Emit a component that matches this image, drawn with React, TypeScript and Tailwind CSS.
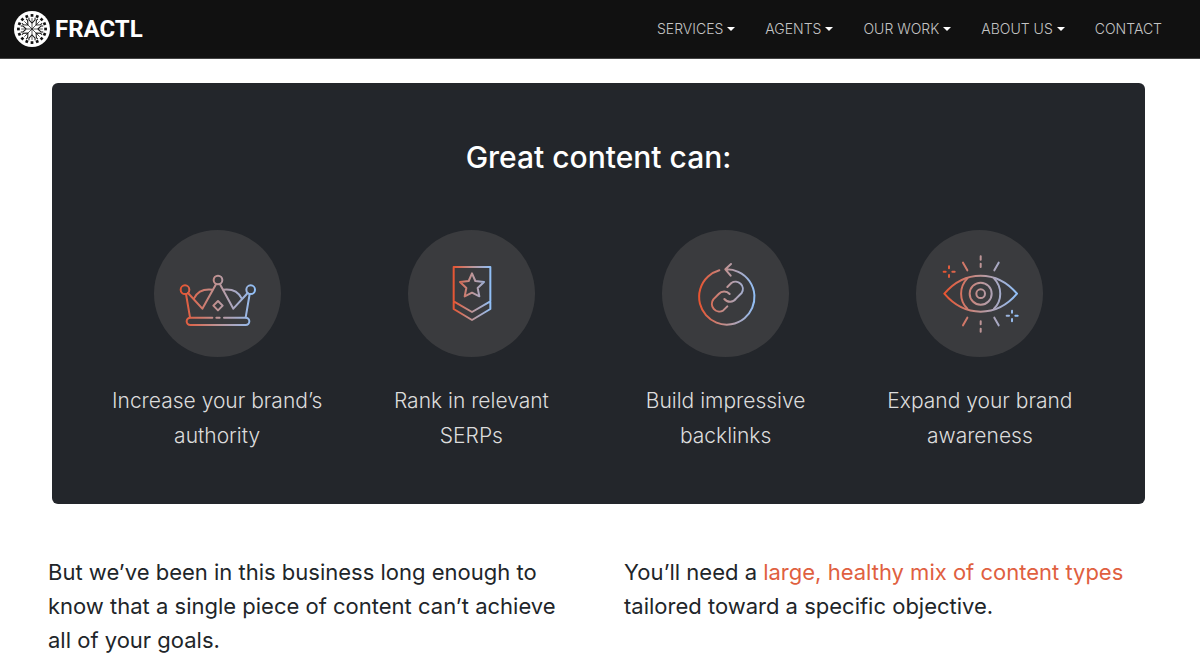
import type { ReactNode } from "react";

type NavItem = {
  label: string;
  menu?: boolean;
};

type Benefit = {
  label: string;
  icon: ReactNode;
};

const navItems: NavItem[] = [
  { label: "SERVICES", menu: true },
  { label: "AGENTS", menu: true },
  { label: "OUR WORK", menu: true },
  { label: "ABOUT US", menu: true },
  { label: "CONTACT" },
];

const spokes = [0, 45, 90, 135, 180, 225, 270, 315];

function Logo() {
  return (
    <svg viewBox="-53 -53 106 106" className="size-[36px]" aria-hidden="true">
      <circle r="53" fill="#fff" />
      {spokes.map((angle) => (
        <g key={angle} transform={`rotate(${angle})`} stroke="#111" fill="none">
          <path d="M0 0V-32" strokeWidth="2" />
          <path d="M0 -17L-9 -27V-33M0 -17L9 -27V-33" strokeWidth="3" />
          <path d="M-4 -44H4V-36H-4Z" fill="#111" stroke="none" />
          <path d="M-4 -44H4V-36H-4Z" fill="#111" stroke="none" transform="rotate(22.5)" />
        </g>
      ))}
    </svg>
  );
}

function IconFrame({ id, from, to, children }: { id: string; from: number; to: number; children: ReactNode }) {
  return (
    <svg viewBox="12 12 381 381" className="size-[127px] rounded-full bg-[#3a3b3e]" aria-hidden="true">
      <defs>
        <linearGradient id={id} gradientUnits="userSpaceOnUse" x1={from} x2={to} y1="0" y2="0">
          <stop offset="0" stopColor="#e8532f" />
          <stop offset="0.5" stopColor="#bd9597" />
          <stop offset="1" stopColor="#8fc1fb" />
        </linearGradient>
      </defs>
      <g stroke={`url(#${id})`} fill="none" strokeWidth="6" strokeLinecap="round" strokeLinejoin="round">
        {children}
      </g>
    </svg>
  );
}

const benefits: Benefit[] = [
  {
    label: "Increase your brand’s authority",
    icon: (
      <IconFrame id="crown" from={90} to={318}>
        <circle cx="105" cy="191" r="13" />
        <circle cx="204" cy="162" r="13" />
        <circle cx="302" cy="191" r="13" />
        <path d="M108 204L120 274M114 201L157 248L198 175M210 175L250 248L293 201M299 204L287 274" />
        <path d="M132 217C142 197 162 188 187 191M220 191C245 188 265 197 275 217" />
        <path d="M204 225L218 239L204 253L190 239Z" />
        <path d="M187 275H121A11 11 0 0 0 121 297H287A11 11 0 0 0 287 275H222M199 275H209" />
      </IconFrame>
    ),
  },
  {
    label: "Rank in relevant SERPs",
    icon: (
      <IconFrame id="badge" from={146} to={262}>
        <path d="M149 123H259V249L204 282L149 249ZM149 226L204 258L259 226" />
        <path d="M204 142L214 165L240 168L221 186L226 211L204 200L182 211L187 186L168 168L194 165Z" />
      </IconFrame>
    ),
  },
  {
    label: "Build impressive backlinks",
    icon: (
      <IconFrame id="link" from={122} to={294}>
        <path d="M184 133A83 83 0 1 0 203 130M219 114L202 130L218 149" />
        <path d="M208 183L220 171A22 22 0 0 1 251 201L234 218A22 22 0 0 1 199 219" />
        <path d="M215 204A22 22 0 0 0 182 204L166 220A23 23 0 0 0 195 254L208 241" />
      </IconFrame>
    ),
  },
  {
    label: "Expand your brand awareness",
    icon: (
      <IconFrame id="eye" from={96} to={318}>
        <path d="M97 203C158 131 254 131 315 203C254 275 158 275 97 203Z" />
        <path d="M166 157C141 183 141 223 166 248M246 157C271 183 271 223 246 248" />
        <circle cx="206" cy="203" r="33" />
        <circle cx="206" cy="203" r="13" />
        <path d="M206.1 91L206 101M206.1 113L206 123M153 110L166 133M260 110L247 133M153 298L166 275M260 298L247 275M206.1 286L206 295M206.1 308L206 317" />
        <path d="M111.1 121L111 127M111.1 147L111 153M95 137H101M121 137H128M300.1 254L300 260M300.1 279L300 286M284 269H291M310 269H317" />
      </IconFrame>
    ),
  },
];

export default function App() {
  return (
    <div className="font-[Inter,sans-serif] text-[#212529]">
      <header className="flex h-[59px] items-center justify-between border-b border-[#444] bg-[#111] pr-[38px] pl-[14px]">
        <a href="#" className="flex items-center gap-[5px] text-white">
          <Logo />
          <span className="font-[Roboto,sans-serif] text-[24px] font-bold">FRACTL</span>
        </a>
        <nav className="flex items-center gap-[30px] text-sm font-light text-[#c4c4c4]">
          {navItems.map((item) =>
            item.menu ? (
              <button key={item.label} type="button" className="flex items-center gap-1">
                {item.label}
                <span className="border-x-4 border-t-4 border-x-transparent border-t-white" />
              </button>
            ) : (
              <a key={item.label} href="#">
                {item.label}
              </a>
            )
          )}
        </nav>
      </header>

      <main>
        <section className="mt-6 mr-[55px] ml-[52px] rounded-md bg-[#23262b] px-[38px] pt-[56px] pb-[51px] text-center text-white">
          <h2 className="text-[30px] leading-[36px] font-medium">Great content can:</h2>
          <ul className="mt-[55px] grid grid-cols-4">
            {benefits.map((benefit) => (
              <li key={benefit.label} className="flex flex-col items-center px-5">
                {benefit.icon}
                <p className="mt-[26px] text-[21px] leading-[35px] font-light text-[#dcdcdc]">{benefit.label}</p>
              </li>
            ))}
          </ul>
        </section>

        <section className="mx-6 mt-[51px] grid grid-cols-2 text-[22px] leading-[34px]">
          <p className="px-6">
            But we’ve been in this business long enough to know that a single piece of content can’t achieve all of
            your goals.
          </p>
          <p className="px-6">
            You’ll need a{" "}
            <a href="#" className="text-[#e0603f]">
              large, healthy mix of content types
            </a>{" "}
            tailored toward a specific objective.
          </p>
        </section>
      </main>
    </div>
  );
}
